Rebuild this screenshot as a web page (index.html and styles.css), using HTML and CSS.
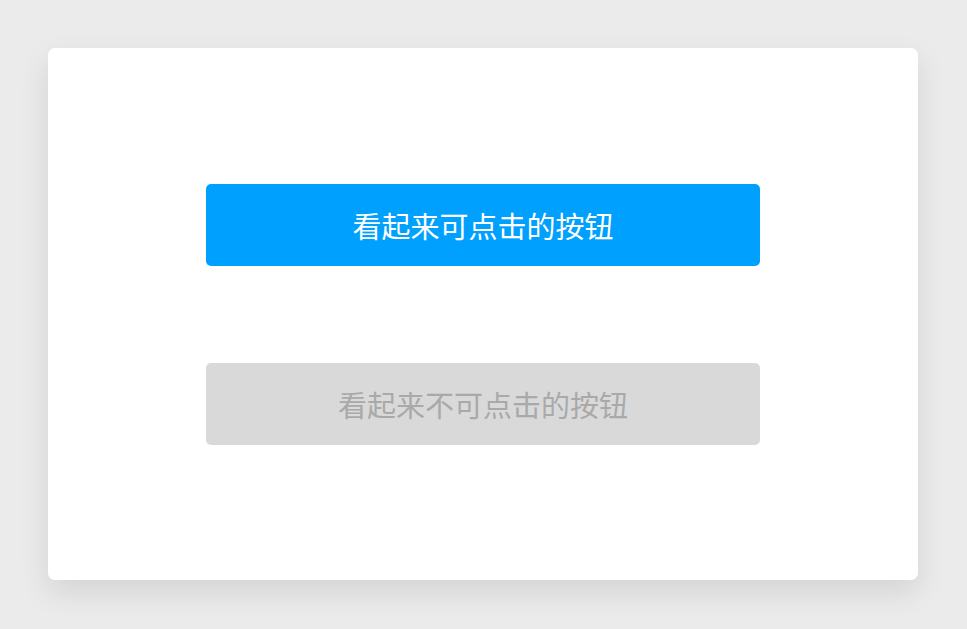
FILE: index.html
```html
<!DOCTYPE html>
<html>
<head>
  <meta charset="utf-8">
  <title>按钮</title>
  <link rel="stylesheet" href="styles.css">
</head>
<body class="page">
  <section class="card">
    <button class="btn btn-active" type="button">看起来可点击的按钮</button>
    <button class="btn btn-disabled" type="button" disabled>看起来不可点击的按钮</button>
  </section>
</body>
</html>
```

FILE: styles.css
```css
*,
*::before,
*::after {
  box-sizing: border-box;
}

.page {
  margin: 0;
  padding: 48px;
  min-height: 100vh;
  background: #ebebeb;
  font-family: "Noto Sans CJK SC", "Noto Sans", sans-serif;
}

.card {
  width: 870px;
  height: 532px;
  background: #fff;
  border-radius: 7px;
  box-shadow: 0 12px 30px 0 rgba(0, 0, 0, 0.1);
  display: flex;
  flex-direction: column;
  align-items: center;
  justify-content: center;
  gap: 97px;
}

.btn {
  width: 554px;
  height: 82px;
  border: none;
  border-radius: 5px;
  font-family: inherit;
  font-size: 29px;
  padding: 0;
}

.btn-active {
  background: #00a0ff;
  color: #fff;
  cursor: pointer;
}

.btn-disabled {
  background: #d9d9d9;
  color: #a9a9a9;
}
```
